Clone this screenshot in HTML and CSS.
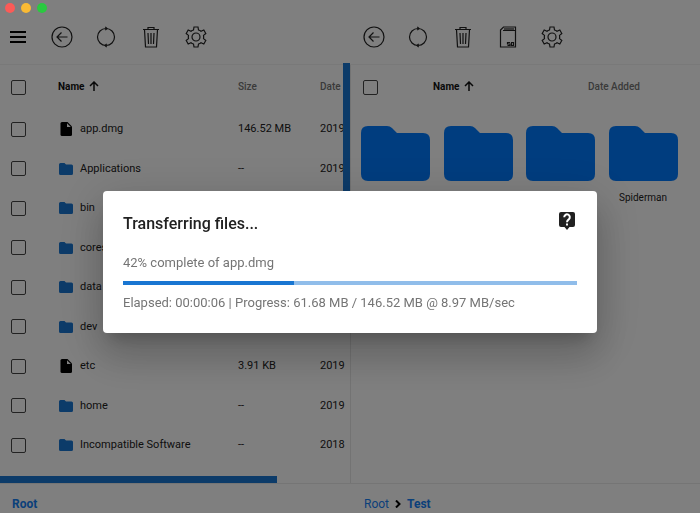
FILE: index.html
```html
<!DOCTYPE html>
<html lang="en">
<head>
<meta charset="utf-8">
<title>File transfer</title>
<link rel="stylesheet" href="styles.css">
</head>
<body>
<svg class="sprite" aria-hidden="true">
  <symbol id="back" viewBox="0 0 22 22"><circle cx="11" cy="11" r="10"/><path d="M16.5 11H6M10.500 6.500 6 11l4.500 4.500"/></symbol>
  <symbol id="refresh" viewBox="0 0 22 22"><circle cx="11" cy="11" r="8.500"/><path d="M10.300.8 12 2.500 10.300 4.200M11.700 17.800 10 19.500l1.700 1.700"/></symbol>
  <symbol id="trash" viewBox="0 0 22 22"><path d="M3 3.500h16M4.500 3.500 5.500 21h11l1-17.500M8 3.500V1.500h6v2M8 7l.5 11M11 7v11M14 7l-.5 11"/></symbol>
  <symbol id="gear" viewBox="0 0 22 22"><circle cx="11" cy="11" r="4"/><path d="M9 1h4l.5 3Q15 4.300 16 5.200L18.800 4l2 3.500-2.300 1.900q.4 1.600 0 3.200l2.300 1.900-2 3.500L16 16.800q-1 .9-2.500 1.200L13 21H9l-.5-3Q7 17.700 6 16.800L3.200 18l-2-3.500 2.300-1.900q-.4-1.600 0-3.200L1.200 7.500l2-3.500L6 5.200Q7 4.300 8.500 4z"/></symbol>
  <symbol id="sd" viewBox="0 0 22 22"><path d="M6.500 1H18.500V21H3.500V4zM6 4.500h12.500M8 2v2M10 2v2M12 2v2M14 2v2M16 2v2M13 16.500h-2.500v1.500H13v1.500h-2.500M14.500 16.500v3h2v-3z"/></symbol>
  <symbol id="up" viewBox="0 0 10 10"><path d="M5 10V1M1 5l4-4 4 4"/></symbol>
  <symbol id="folder" viewBox="0 0 14 12"><path d="M1.500 0H5.500L7 1.500H12.500Q14 1.500 14 3V10.500Q14 12 12.500 12H1.500Q0 12 0 10.500V1.500Q0 0 1.500 0z"/></symbol>
  <symbol id="file" viewBox="0 0 14 14"><path d="M3 0H8.500L13 4.500V12.500Q13 14 11.500 14H3Q1.500 14 1.500 12.500V1.500Q1.500 0 3 0z"/><path class="fold" d="M8 1.200V5h3.800z"/></symbol>
  <symbol id="bigfolder" viewBox="0 0 69 55"><path d="M7 0H26Q29 0 31 2L36 7H62Q69 7 69 14V48Q69 55 62 55H7Q0 55 0 48V7Q0 0 7 0z"/></symbol>
</svg>

<div class="lights" aria-hidden="true"><span class="light close"></span><span class="light minimize"></span><span class="light expand"></span></div>

<main class="panes">
  <section class="pane local">
    <header class="toolbar">
      <button class="menu" aria-label="Menu"><span></span><span></span><span></span></button>
      <button aria-label="Back"><svg><use href="#back"/></svg></button>
      <button aria-label="Refresh"><svg><use href="#refresh"/></svg></button>
      <button class="delete" aria-label="Delete"><svg><use href="#trash"/></svg></button>
      <button aria-label="Settings"><svg><use href="#gear"/></svg></button>
    </header>
    <div class="listing">
      <table>
        <thead><tr><th class="check"><input type="checkbox" aria-label="Select all"></th><th class="name sorted">Name <svg class="up"><use href="#up"/></svg></th><th class="size">Size</th><th class="date">Date</th></tr></thead>
        <tbody>
          <tr><td class="check"><input type="checkbox" aria-label="app.dmg"></td><td class="name"><span class="entry"><svg class="file"><use href="#file"/></svg>app.dmg</span></td><td>146.52 MB</td><td>2019</td></tr>
          <tr><td class="check"><input type="checkbox" aria-label="Applications"></td><td class="name"><span class="entry"><svg><use href="#folder"/></svg>Applications</span></td><td>--</td><td>2019</td></tr>
          <tr><td class="check"><input type="checkbox" aria-label="bin"></td><td class="name"><span class="entry"><svg><use href="#folder"/></svg>bin</span></td><td>--</td><td>2019</td></tr>
          <tr><td class="check"><input type="checkbox" aria-label="cores"></td><td class="name"><span class="entry"><svg><use href="#folder"/></svg>cores</span></td><td>--</td><td>2019</td></tr>
          <tr><td class="check"><input type="checkbox" aria-label="data"></td><td class="name"><span class="entry"><svg><use href="#folder"/></svg>data</span></td><td>--</td><td>2019</td></tr>
          <tr><td class="check"><input type="checkbox" aria-label="dev"></td><td class="name"><span class="entry"><svg><use href="#folder"/></svg>dev</span></td><td>--</td><td>2019</td></tr>
          <tr><td class="check"><input type="checkbox" aria-label="etc"></td><td class="name"><span class="entry"><svg class="file"><use href="#file"/></svg>etc</span></td><td>3.91 KB</td><td>2019</td></tr>
          <tr><td class="check"><input type="checkbox" aria-label="home"></td><td class="name"><span class="entry"><svg><use href="#folder"/></svg>home</span></td><td>--</td><td>2019</td></tr>
          <tr><td class="check"><input type="checkbox" aria-label="Incompatible Software"></td><td class="name"><span class="entry"><svg><use href="#folder"/></svg>Incompatible Software</span></td><td>--</td><td>2018</td></tr>
        </tbody>
      </table>
      <span class="thumb-y"></span>
      <span class="thumb-x"></span>
    </div>
    <nav class="crumbs" aria-label="Local path"><a href="#root" class="current">Root</a></nav>
  </section>

  <section class="pane device">
    <header class="toolbar">
      <button aria-label="Back"><svg><use href="#back"/></svg></button>
      <button aria-label="Refresh"><svg><use href="#refresh"/></svg></button>
      <button class="delete" aria-label="Delete"><svg><use href="#trash"/></svg></button>
      <button aria-label="Storage"><svg><use href="#sd"/></svg></button>
      <button aria-label="Settings"><svg><use href="#gear"/></svg></button>
    </header>
    <div class="listing">
      <div class="grid-head"><input type="checkbox" aria-label="Select all"><span class="sorted">Name <svg class="up"><use href="#up"/></svg></span><span>Date Added</span></div>
      <div class="tiles">
        <div class="tile"><svg><use href="#bigfolder"/></svg></div>
        <div class="tile"><svg><use href="#bigfolder"/></svg></div>
        <div class="tile"><svg><use href="#bigfolder"/></svg></div>
        <div class="tile"><svg><use href="#bigfolder"/></svg><span>Spiderman</span></div>
      </div>
    </div>
    <nav class="crumbs" aria-label="Device path"><a href="#root">Root</a><svg class="chevron" viewBox="0 0 6 8"><path d="M1 0.500 4.500 4 1 7.500"/></svg><a href="#test" class="current">Test</a></nav>
  </section>
</main>

<div class="backdrop">
  <div class="dialog" role="dialog" aria-labelledby="title">
    <div class="dialog-head">
      <h1 id="title">Transferring files...</h1>
      <button aria-label="Help"><svg viewBox="0 0 16 18"><path class="bubble" d="M2 0H14Q16 0 16 2V13Q16 15 14 15H10.500L8 18 5.500 15H2Q0 15 0 13V2Q0 0 2 0z"/><path class="mark" d="M5.200 5.200a2.800 2.800 0 1 1 4.500 2.200C8.600 8.200 8 8.700 8 10.200"/><path class="dot" d="M7 11.500h2v2H7z"/></svg></button>
    </div>
    <p>42% complete of app.dmg</p>
    <div class="track" role="progressbar" aria-label="Transfer" aria-valuenow="42" aria-valuemin="0" aria-valuemax="100"><div class="fill" style="width:37.600%"></div></div>
    <p>Elapsed: 00:00:06 | Progress: 61.68 MB / 146.52 MB @ 8.97 MB/sec</p>
  </div>
</div>
</body>
</html>
```
FILE: styles.css
```css
* { box-sizing: border-box; }
body {
  margin: 0;
  min-height: 100vh;
  background: #fff;
  color: #212121;
  font: 11px/16px Roboto, sans-serif;
}
button { padding: 0; border: 0; background: none; color: inherit; }
svg { display: block; }
.sprite { position: absolute; width: 0; height: 0; }

.lights { position: fixed; z-index: 3; top: 3px; left: 5px; display: flex; gap: 6px; }
.light { width: 10px; height: 10px; border-radius: 50%; }
.close { background: #fc5b57; }
.minimize { background: #f9ba34; }
.expand { background: #2ac940; }

.panes { display: grid; grid-template-columns: 1fr 1fr; min-height: 100vh; }
.pane { display: flex; flex-direction: column; min-width: 0; }

.toolbar {
  display: flex;
  align-items: center;
  gap: 22px;
  height: 65px;
  padding: 9px 12px 0 10px;
  border-bottom: 1px solid #f2f2f2;
}
.device .toolbar { padding-left: 13px; }
.toolbar svg { width: 22px; height: 22px; fill: none; stroke: #222; stroke-width: 1.2; }
.toolbar .delete { width: 24px; padding: 0 1px; }
.menu { display: grid; gap: 3px; width: 16px; margin-right: 3px; }
.menu span { height: 2px; background: #000; }

.listing { position: relative; flex: 1; }
.device .listing { border-left: 1px solid #e6e6e6; }
table { width: 100%; table-layout: fixed; border-collapse: collapse; }
th, td { padding: 0; text-align: left; white-space: nowrap; }
thead tr { height: 44px; }
tbody tr { height: 40px; }
tbody tr:nth-child(even) { height: 39px; }
th { color: #757575; font-size: 10px; font-weight: 500; }
.check { width: 58px; padding-left: 11px; }
.size { width: 82px; }
.date { width: 30px; }
input {
  display: block;
  appearance: none;
  width: 15px;
  height: 15px;
  margin: 0;
  border: 1px solid #444;
  border-radius: 2px;
}
.sorted { color: #111; font-weight: 700; }
.up {
  display: inline-block;
  width: 10px;
  height: 10px;
  margin-left: 2px;
  vertical-align: -1px;
  fill: none;
  stroke: #111;
  stroke-width: 1.5;
}
.entry { display: flex; align-items: center; gap: 6px; }
.entry svg { width: 16px; height: 12px; fill: #1976d2; }
.entry .file { height: 14px; fill: #000; }
.fold { fill: #fff; }

.thumb-y, .thumb-x { position: absolute; background: #1976d2; }
.thumb-y { top: -2px; right: 0; width: 7px; height: 46%; }
.thumb-x { bottom: 0; left: 0; width: 79%; height: 7px; }

.grid-head {
  display: grid;
  grid-template-columns: 70px 155px 1fr;
  align-items: center;
  height: 44px;
  padding-left: 12px;
  color: #757575;
  font-size: 10px;
  font-weight: 500;
}
.tiles { display: grid; grid-template-columns: repeat(4, 1fr); padding: 17px 9px 16px 10px; }
.tile { display: grid; justify-items: center; align-content: start; gap: 9px; width: 69px; font-size: 10px; }
.tile svg { width: 69px; height: 55px; fill: #007aff; }

.crumbs {
  display: flex;
  align-items: center;
  gap: 6px;
  height: 30px;
  padding: 10px 12px 0;
  border-top: 1px solid #ebebeb;
  font-size: 12px;
}
.device .crumbs { padding-left: 14px; }
.crumbs a { color: #1480f4; text-decoration: none; }
.crumbs .current { font-weight: 700; }
.chevron { width: 6px; height: 8px; fill: none; stroke: #000; stroke-width: 2; }

.backdrop {
  position: fixed;
  z-index: 2;
  inset: 0;
  display: grid;
  place-items: center;
  padding-top: 11px;
  background: rgba(0, 0, 0, 0.5);
}
.dialog {
  width: 494px;
  max-width: 90%;
  padding: 20px 20px 22px;
  border-radius: 4px;
  background: #fff;
  color: #757575;
  font-size: 13px;
  box-shadow: 0 11px 15px -7px rgba(0, 0, 0, 0.2), 0 24px 38px 3px rgba(0, 0, 0, 0.14), 0 9px 46px 8px rgba(0, 0, 0, 0.12);
}
.dialog-head { display: flex; align-items: flex-start; justify-content: space-between; margin-bottom: 18px; }
.dialog-head svg { width: 16px; height: 18px; margin: 1px 2px 0 0; }
.bubble { fill: #212121; }
.mark { fill: none; stroke: #fff; stroke-width: 2; }
.dot { fill: #fff; }
h1 { margin: 0; color: #212121; font-size: 16px; font-weight: 500; line-height: 26px; }
p { margin: 0; }
.track { height: 4px; margin: 10px 0; background: #90bdea; }
.fill { height: 100%; background: #1976d2; }
```
